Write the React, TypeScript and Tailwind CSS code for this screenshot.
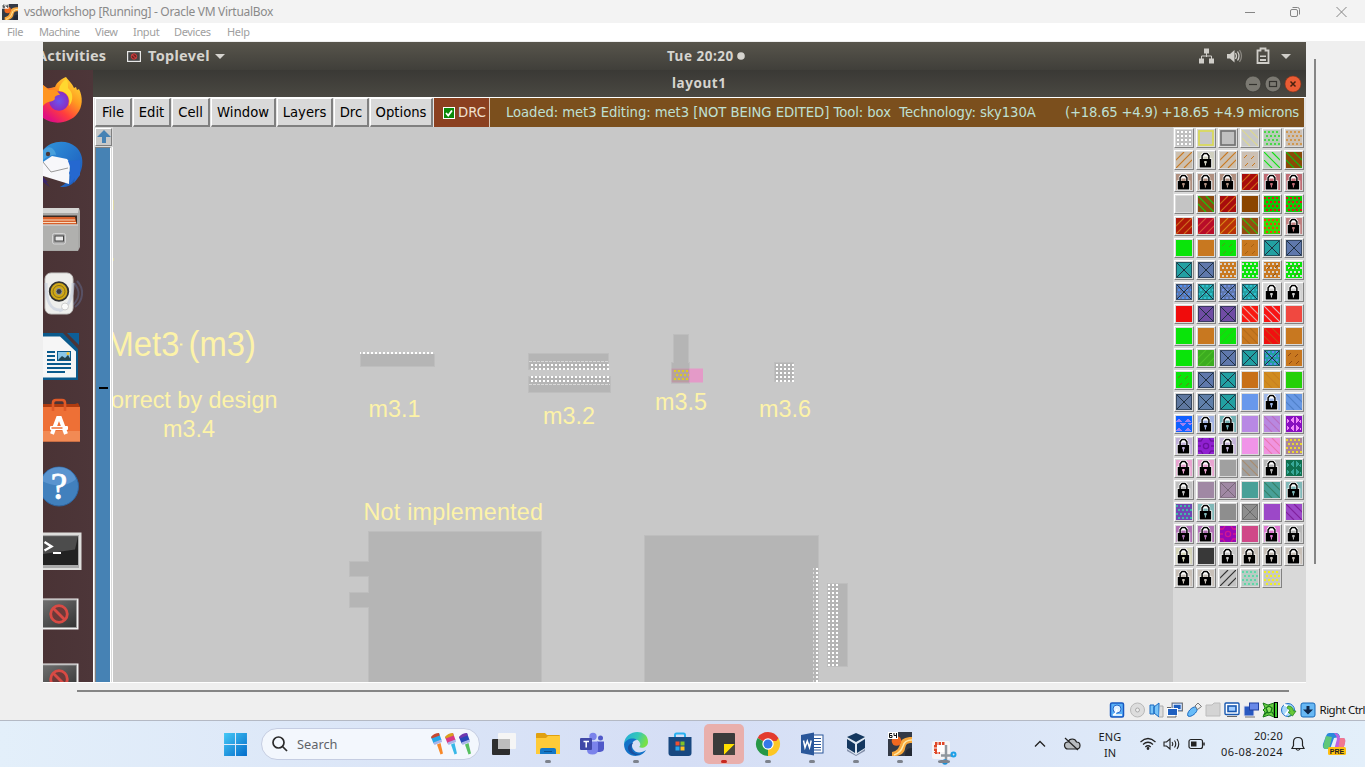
import React from "react";

type Kind = "solid" | "up" | "down" | "dots" | "dash" | "x" | "frame" | "lock" | "xdots" | "tri" | "rings" | "weave" | "dotdash" | "grid";
type Swatch = [Kind, string, string?];

const G = "#0ae40a";
const O = "#c87820";
const T = "#22a0a2";
const B = "#5f78ac";
const N = "#c8c8c8";

const swatches: Swatch[] = [
  ["grid", "#c0c0c0", "#ffffff"], ["frame", N, "#dcdc50"], ["frame", "#c0c0c0", "#707070"], ["down", N, "#dcd890"], ["dots", "#b8ccb8", "#48d848"], ["dots", "#ccc0b4", "#d09850"],
  ["up", "#ccc0b0", O], ["lock", "#d0d0c0"], ["up", "#ccc0b0", O], ["dash", "#ccc0b4", O], ["down", "#c0d4c0", "#10e010"], ["down", "#8b4a08", "#10c010"],
  ["lock", "#b09080"], ["lock", "#b09080"], ["lock", "#b09080"], ["up", "#a80c0c", "#d06818"], ["lock", "#c06c74"], ["lock", "#c06c74"],
  ["solid", "#c4c4c4"], ["down", "#8b4a10", "#10d010"], ["up", "#a80c0c", "#d06818"], ["solid", "#8b4500"], ["dots", "#10c808", "#e01818"], ["dotdash", "#10c808", "#e01818"],
  ["up", "#b01808", "#d07020"], ["up", "#b80c28", "#d85038"], ["up", "#b83008", "#d88818"], ["down", "#954c10", "#30c010"], ["dots", "#38d808", "#f04010"], ["lock", "#c08080"],
  ["solid", G], ["solid", O], ["dash", G, "#509c18"], ["dash", O, "#a86010"], ["x", T], ["x", B],
  ["x", T], ["x", B], ["dots", O, "#d8d0c8"], ["dots", G, "#d0e4d0"], ["dotdash", O, "#d8d0c8"], ["dotdash", G, "#d8e0d8"],
  ["xdots", B, "#5090f0"], ["xdots", T, "#30c0d0"], ["xdots", B, "#7090e0"], ["xdots", T, "#30c0d0"], ["lock", "#d0d0d0"], ["lock", "#d0d0d0"],
  ["solid", "#f00c0c"], ["x", "#704ca4"], ["x", "#704ca4"], ["down", "#f81810", "#e8a8a0"], ["down", "#f81414", "#e0b8c0"], ["solid", "#f04840"],
  ["solid", G], ["solid", O], ["up", G, "#28c818"], ["down", O, "#b46c1c"], ["down", "#f01010", "#c84818"], ["solid", O],
  ["solid", G], ["up", "#3cac20", "#4cc028"], ["x", B], ["x", T], ["xdots", T, "#5888f0"], ["dash", O, "#904810"],
  ["dash", G, "#688018"], ["x", B], ["x", T], ["solid", "#c87018"], ["down", "#d08c20", "#c88020"], ["solid", "#24d008"],
  ["x", "#5f78a0"], ["x", "#6080aa"], ["x", T], ["solid", "#6898ec"], ["lock", "#a0b8e8"], ["down", "#6898e4", "#5080c8"],
  ["tri", "#1060ff", "#a080f0"], ["lock", "#a0b0e0"], ["lock", "#70b0b4"], ["solid", "#b888e4"], ["down", "#b888e0", "#b870c0"], ["weave", "#8810c0", "#f088f8"],
  ["lock", "#c0b0d8"], ["rings", "#9020d0", "#6c10a0"], ["lock", "#c4b4d8"], ["solid", "#f094e8"], ["down", "#f094e0", "#e878b0"], ["dots", "#aa8498", "#e8d830"],
  ["lock", "#e8a4d0"], ["lock", "#e8a4d0"], ["solid", "#a0a0a0"], ["down", "#a0a0a0", "#a88c70"], ["lock", "#b8b8b8"], ["weave", "#107050", "#38a898"],
  ["lock", "#c0c0c0"], ["solid", "#a088a4"], ["x", "#a088a4", "#786878"], ["solid", "#48a098"], ["down", "#48a098", "#388068"], ["lock", "#80b8b8"],
  ["dots", "#7048b4", "#40b8a8"], ["lock", "#80b8b8"], ["solid", "#8e8e8e"], ["x", "#8e8e8e", "#686868"], ["solid", "#9c48c8"], ["down", "#9c48c8", "#80209c"],
  ["lock", "#b070b4"], ["lock", "#b070b4"], ["rings", "#9808b4", "#d01890"], ["solid", "#d04888"], ["lock", "#dc78d0"], ["lock", "#b8b8b8"],
  ["lock", "#d4d4b8"], ["solid", "#383838"], ["lock", "#c8c8c8"], ["lock", "#c8c0b8"], ["lock", "#c8c0b8"], ["lock", "#c8c0b8"],
  ["lock", "#c8c0b8"], ["lock", "#c8c0b8"], ["up", "#c4c4c4", "#303030"], ["dots", "#b8ccc4", "#60d8a8"], ["dots", "#c8c8c0", "#f0f020"],
];

const dotCells = [0, 1, 2, 3].flatMap((r) => [0, 1, 2, 3].map((c) => [c * 4 + (r % 2 ? 2 : 0), r * 4 + 1]));

function Pattern({ kind, bg, fg = "#203040" }: { kind: Kind; bg: string; fg?: string }) {
  const diag = (up: boolean) => (
    <g stroke={fg} strokeWidth="1.15" shapeRendering="auto">
      {[-8, 0, 8].map((o) => (up ? <path key={o} d={`M${o} 16L${o + 16} 0`} /> : <path key={o} d={`M${o} 0L${o + 16} 16`} />))}
    </g>
  );
  const dots = (
    <g fill={fg}>{dotCells.map(([x, y]) => <rect key={`${x}-${y}`} x={x} y={y} width="2" height="2" />)}</g>
  );
  switch (kind) {
    case "up":
      return diag(true);
    case "down":
      return diag(false);
    case "dots":
      return dots;
    case "grid":
      return <g fill={fg}>{[1, 5, 9, 13].flatMap((y) => [1, 5, 9, 13].map((x) => <rect key={`${x}-${y}`} x={x} y={y} width="2.4" height="2.4" />))}</g>;
    case "dotdash":
      return <g>{dots}<path d="M3 7l3-3M9 14l3-3M11 6l3-3" stroke="#805020" strokeWidth=".9" /></g>;
    case "dash":
      return <path d="M2 6l3-3M9 7l3-3M3 14l3-3M10 14l3-3" stroke={fg} strokeWidth="1" shapeRendering="auto" />;
    case "frame":
      return <rect x="1" y="1" width="14" height="14" fill="none" stroke={fg} strokeWidth="1.6" shapeRendering="auto" />;
    case "x":
      return <g stroke={fg} fill="none"><rect x=".5" y=".5" width="15" height="15" strokeWidth="1" opacity=".65" /><path d="M1 1L15 15M15 1L1 15" strokeWidth="1.2" /></g>;
    case "xdots":
      return <g>{dots}<g stroke="#203040" fill="none"><rect x=".5" y=".5" width="15" height="15" opacity=".55" /><path d="M1 1L15 15M15 1L1 15" strokeWidth="1.2" /></g></g>;
    case "tri":
      return <path fill={fg} d="M0 6l3-4 3 4zM9 6l3-4 3 4zM4 7h6l-3 4zM0 15l3-4 3 4zM9 15l3-4 3 4zM12 7h4l-2 3z" />;
    case "rings":
      return <g stroke={fg} fill="none" strokeWidth="1.3" shapeRendering="auto"><circle cx="8" cy="8" r="2.600" /><path d="M0 3h3l2-3M16 3h-3l-2-3M0 13h3l2 3M16 13h-3l-2 3M0 8h3M13 8h3" /></g>;
    case "weave":
      return <path fill={fg} d="M1 2l2 3-2 3zM1 9l2 3-2 3zM8 1v6L4 4zM8 9v6l-4-3zM10 1l3 3-3 3zM10 9l3 3-3 3zM15 3v5l-2-2zM15 11v4l-2-2z" />;
    case "lock":
      return (
        <g shapeRendering="auto" transform="translate(.7 0)">
          <path d="M0 16V6.500H2V3L4.300 0h5L11.500 3V6.500H13.500V16z" fill="#fff" />
          <path d="M3.400 7.500V3.800L5.300 1.500h3L10.200 3.800V7.500" fill="none" stroke="#000" strokeWidth="1.500" />
          <path d="M4.600 7V4.500h4.400V7z" fill={bg} />
          <path d="M1 7h11.500v8.500H1z" fill="#000" />
          <path d="M5.500 9h2.500v2.300h-.7V13.500H6.200V11.300H5.500z" fill={bg} />
        </g>
      );
    default:
      return null;
  }
}

function Palette() {
  return (
    <div className="grid w-[133px] shrink-0 grid-cols-6 content-start gap-[2px] bg-[#d9d9d9] pl-px pr-[2px] pt-px">
      {swatches.map(([kind, bg, fg], i) => (
        <div key={i} className="h-5 w-5 border border-b-[#828282] border-l-white border-r-[#828282] border-t-white bg-[#d9d9d9] p-px">
          <svg viewBox="0 0 16 16" className="block h-4 w-4" shapeRendering="crispEdges">
            <rect width="16" height="16" fill={bg} />
            <Pattern kind={kind} bg={bg} fg={fg} />
          </svg>
        </div>
      ))}
    </div>
  );
}

function DockIcon({ children }: { children: React.ReactNode }) {
  return <svg viewBox="0 0 50 64.3" className="block h-[64.3px] w-[50px] shrink-0">{children}</svg>;
}

function Blocked() {
  return (
    <DockIcon>
      <rect x="-10" y="16.500" width="45.500" height="31" fill="#f0f0f0" />
      <rect x="-10" y="18" width="43.500" height="27.500" fill="url(#term)" stroke="#999" />
      <circle cx="16" cy="32" r="8.300" fill="#6a3a3a" stroke="#d84a44" strokeWidth="2.800" />
      <path d="M10.500 26.500l11 11" stroke="#d84a44" strokeWidth="2.800" />
    </DockIcon>
  );
}

function Dock() {
  return (
    <div className="flex w-[50px] shrink-0 flex-col overflow-hidden bg-linear-to-r from-[#4a3335] to-[#4d3639]">
      <div className="-mt-[2px]">
        <DockIcon>
          <defs>
            <linearGradient id="ff" x1="1" y1="0" x2=".3" y2="1"><stop offset="0" stopColor="#ffee3c" /><stop offset=".45" stopColor="#ff9a20" /><stop offset=".75" stopColor="#ff3d3d" /><stop offset="1" stopColor="#e01080" /></linearGradient>
            <radialGradient id="globe"><stop offset="0" stopColor="#6a55f0" /><stop offset="1" stopColor="#8a2cc0" /></radialGradient>
            <linearGradient id="term" x1="0" y1="0" x2="1" y2="1"><stop offset="0" stopColor="#777" /><stop offset="1" stopColor="#333" /></linearGradient>
            <linearGradient id="tb" x1="0" y1="0" x2="1" y2="1"><stop offset="0" stopColor="#2f95dc" /><stop offset="1" stopColor="#1c55b8" /></linearGradient>
          </defs>
          <path d="M23 9c3 4 6 6 8 11l2-1 1 3 2-1c4 8 4 18-2 25-7 9-23 12-34 4V17l4 3c3 1 5-1 8-1 2-5 6-8 11-10z" fill="url(#ff)" />
          <circle cx="16" cy="33" r="9.800" fill="url(#globe)" />
          <path d="M0 17l6 5c4-1 9 0 11 5-4 0-6 2-5 4-3 4-8 1-12 7z" fill="#ff9520" />
          <path d="M16 23c8 0 12 7 10 15 5-6 4-14-1-18 0-4 0-7-2-9-5 4-7 8-7 12z" fill="#ffd830" />
        </DockIcon>
        <DockIcon>
          <path d="M0 18C8 8 24 7 33 15c10 9 8 27-4 37-4 3-8 3-12 3 6-3 8-6 9-10L0 40z" fill="url(#tb)" />
          <path d="M0 30l9-6 15 3 3 4-1 21-26-8z" fill="#f7f7fa" />
          <path d="M0 30l8 10 17-4" stroke="#999" fill="none" />
          <path d="M0 19c5-7 12-3 13 4-5-1-9 2-13 5z" fill="#48a0dc" />
          <circle cx="5" cy="22" r="2.200" fill="#4a3838" />
          <path d="M25 29l3 8-2 4 2 4-2 8 6-7-1 5 6-8V28z" fill="#2568d0" />
          <path d="M0 45l5 5h-2l4 5-7-5z" fill="#382468" />
        </DockIcon>
        <DockIcon>
          <path d="M0 11h36l1 3v36l-2 4H0z" fill="#a8a8a6" />
          <path d="M0 11h36l-1 5H0z" fill="#d5d5d3" />
          <rect y="18.500" width="34" height="11" fill="#3a2a22" />
          <path d="M0 20h32l2 8H0z" fill="#d8602a" />
          <path d="M0 23h32M0 25.500h33" stroke="#f8dcc0" />
          <path d="M0 27.500h35v25.500H0z" fill="#b0b0ae" />
          <path d="M0 28h35" stroke="#ddd" />
          <rect x="9.500" y="36.500" width="13" height="10.500" rx="2" fill="#a4a4a4" stroke="#d6d6d6" />
          <rect x="12" y="39" width="8.500" height="5" fill="#e8e8e8" stroke="#444" />
        </DockIcon>
        <DockIcon>
          <path d="M34 20c8 8 6 20-2 26M31 22c7 8 5 16-1 22" stroke="#687aa8" strokeWidth="2" fill="none" opacity=".4" />
          <rect x="2" y="12" width="28" height="41" rx="6" fill="#eeeeec" stroke="#c8c8c6" />
          <path d="M3 22c0 20 5 27 14 27M30 22c0 17-6 25-14 28" stroke="#c3cbdc" strokeWidth="3" fill="none" opacity=".6" />
          <circle cx="16" cy="30.500" r="9.300" fill="#d0a818" stroke="#333" strokeWidth="1.800" />
          <circle cx="16" cy="30.500" r="6" fill="none" stroke="#8a701a" />
          <circle cx="16" cy="30.500" r="3" fill="#3a3d44" stroke="#999" />
          <circle cx="22" cy="45.500" r="3.500" fill="#fafafa" stroke="#ccc" />
        </DockIcon>
        <DockIcon>
          <path d="M0 8h20l15 16v31H0z" fill="#0b5a8c" />
          <path d="M24 8h12v12z" fill="#0d5f98" />
          <path d="M0 11.500h17l16 15v26H0z" fill="#f6f6f6" />
          <path d="M4 27h8M4 31h8M4 35h8M4 39h24M4 43h24M4 47h18" stroke="#0b5a8c" strokeWidth="2" />
          <rect x="14.500" y="26.500" width="13" height="9" fill="#8ac6e8" stroke="#0b5a8c" />
          <path d="M15 35l4-4 3 2 3-3 3 5z" fill="#244450" />
          <circle cx="25" cy="28.500" r="1.500" fill="#f8c830" />
        </DockIcon>
        <DockIcon>
          <path d="M0 15h32l3-1 2 4v2H0z" fill="#b03c10" />
          <path d="M0 18h37v34.500H0z" fill="#ee7036" />
          <path d="M0 42h37v10.500H0z" fill="#f28a54" />
          <path d="M10 22v-8q0-3 3-3h6q3 0 3 3v8" fill="none" stroke="#e05a28" strokeWidth="2.600" />
          <path d="M9 45l6-16h2l6 16" fill="none" stroke="#fff" strokeWidth="4" />
          <rect x="7" y="37" width="18" height="4" rx="1" fill="#fff" />
          <path d="M8.500 39h11" stroke="#ee7036" strokeWidth="1.500" />
        </DockIcon>
        <DockIcon>
          <circle cx="16" cy="32.500" r="19.500" fill="#4180bd" stroke="#2e65a2" />
          <path d="M-1 25a18 18 0 0 1 34 0c-8 8-24 8-34 2z" fill="#6ba2da" opacity=".6" />
          <text x="16" y="45" textAnchor="middle" fontSize="37" fontFamily="Liberation Serif, serif" fill="#fff" stroke="#fff" strokeWidth=".8">?</text>
        </DockIcon>
        <DockIcon>
          <path d="M-2 14.500h40.500v37.500H-2z" fill="#dededc" />
          <path d="M-2 17h38v33H-2z" fill="#aaa" />
          <path d="M-2 18.500h37v28.500H-2z" fill="#222" />
          <path d="M-2 18.500h37l-3 13L0 36z" fill="#4c4c4c" />
          <path d="M1.500 24l7 4.500-7 4" stroke="#fff" strokeWidth="2.400" fill="none" />
          <path d="M10 35h8" stroke="#fff" strokeWidth="2" />
        </DockIcon>
        <Blocked />
        <Blocked />
      </div>
    </div>
  );
}

function LayoutCanvas() {
  return (
    <svg viewBox="113 127 1060 555" className="block h-[555px] w-[1060px] shrink-0 bg-[#c8c8c8]">
      <defs>
        <pattern id="dw" x="361" y="352" width="4" height="4" patternUnits="userSpaceOnUse"><rect x="2" width="2" height="2" fill="#fff" /></pattern>
        <pattern id="d2" x="529" y="364" width="4" height="4" patternUnits="userSpaceOnUse"><rect x="2" width="2" height="2" fill="#fff" /></pattern>
        <pattern id="d3" x="529" y="376" width="4" height="4" patternUnits="userSpaceOnUse"><rect x="2" width="2" height="2" fill="#fff" /></pattern>
        <pattern id="d6" x="776" y="364" width="4" height="4" patternUnits="userSpaceOnUse"><rect width="2" height="2" fill="#fff" /></pattern>
        <pattern id="dv" x="816" y="568" width="4" height="4" patternUnits="userSpaceOnUse"><rect width="2" height="2" fill="#fff" /></pattern>
        <pattern id="dr" x="828" y="584" width="4" height="4" patternUnits="userSpaceOnUse"><rect width="2" height="2" fill="#fff" /></pattern>
      </defs>
      <g fill="#b5b5b5" stroke="#bebebe" strokeWidth="1" shapeRendering="crispEdges">
        <rect x="360.500" y="353.500" width="74" height="12.500" />
        <rect x="528.500" y="353.500" width="80" height="16" />
        <rect x="528.500" y="376.500" width="82" height="16" />
        <rect x="673.500" y="334.500" width="15" height="30" />
        <rect x="671.500" y="362.500" width="18" height="21" />
        <rect x="774.500" y="362.500" width="19" height="19" />
        <rect x="349.500" y="561.500" width="20" height="15" />
        <rect x="349.500" y="592.500" width="20" height="15" />
        <rect x="368.500" y="531.500" width="173" height="155" />
        <rect x="644.500" y="535.500" width="174" height="155" />
        <rect x="827.500" y="583.500" width="20" height="83" />
      </g>
      <path d="M367 562h4v14h-4zM367 593h4v14h-4zM674 361h14v4h-14z" fill="#b5b5b5" />
      <rect x="360" y="351" width="75" height="3" fill="#c8c8c8" />
      <rect x="360" y="352" width="75" height="2" fill="url(#dw)" />
      <path d="M529 361.500h80" stroke="#d8d8d8" strokeDasharray="3 1" />
      <rect x="529" y="364" width="80" height="6" fill="url(#d2)" />
      <rect x="529" y="376" width="82" height="6" fill="url(#d3)" />
      <path d="M529 384.500h81" stroke="#d8d8d8" strokeDasharray="3 1" />
      <rect x="689" y="368.500" width="14" height="14" fill="#e49ac8" />
      <rect x="672" y="369" width="17" height="13" fill="#b4a49c" stroke="#c890b0" strokeWidth=".7" />
      <g fill="#dcc828">
        {[0, 1, 2].flatMap((r) => [0, 1, 2, 3].map((c) => <rect key={`${r}-${c}`} x={(r === 1 ? 676 : 674) + c * 4} y={370 + r * 4} width={r === 1 && c === 3 ? 1 : 2} height="2" />))}
      </g>
      <rect x="776" y="364" width="18" height="18" fill="url(#d6)" />
      <path d="M813.500 568v114" stroke="#ddd" strokeDasharray="2 2" />
      <rect x="816" y="568" width="2" height="114" fill="url(#dv)" />
      <rect x="828" y="584" width="11" height="82" fill="url(#dr)" />
      <path d="M113.500 200v10M113.500 258v3" stroke="#dcd8a8" strokeWidth="1" />
      <g fill="#fdf3a8" fontFamily="Liberation Sans, Arial, sans-serif" fontSize="23.400">
        <text x="256" y="356" textAnchor="end" fontSize="34.500" textLength="149.500" lengthAdjust="spacingAndGlyphs">Met3 (m3)</text>
        <path d="M180 344.500h2.500" stroke="#fdf3a8" strokeWidth="2" />
        <text x="277.500" y="407.500" textAnchor="end">Correct by design</text>
        <text x="189" y="437" textAnchor="middle">m3.4</text>
        <text x="394.500" y="417" textAnchor="middle">m3.1</text>
        <text x="569" y="424" textAnchor="middle">m3.2</text>
        <text x="681" y="410" textAnchor="middle">m3.5</text>
        <text x="785" y="417" textAnchor="middle">m3.6</text>
        <text x="363.500" y="520" textLength="179.500">Not implemented</text>
      </g>
    </svg>
  );
}

function ToolButton({ className, children }: { className: string; children: React.ReactNode }) {
  return (
    <div className={`flex h-[29px] shrink-0 items-center justify-center border-b-2 border-l border-r-2 border-t border-b-[#808080] border-l-white border-r-[#808080] border-t-white bg-[#d9d9d9] pt-px text-black ${className}`}>
      {children}
    </div>
  );
}

function Toolbar() {
  return (
    <div className="flex h-[30px] gap-px border-l border-t border-white bg-[#e4e4e4] pl-px font-['DejaVu_Sans',sans-serif] text-[13.200px]">
      <ToolButton className="w-[37px]">File</ToolButton>
      <ToolButton className="w-[38px]">Edit</ToolButton>
      <ToolButton className="w-[38px]">Cell</ToolButton>
      <ToolButton className="w-[65px]">Window</ToolButton>
      <ToolButton className="w-[56px]">Layers</ToolButton>
      <ToolButton className="w-[35px]">Drc</ToolButton>
      <ToolButton className="w-[63px]">Options</ToolButton>
      <div className="flex h-[29px] w-[56px] items-center border-r border-[#d8c8b8] bg-[#8b4020] pl-[9px] text-[#f0e0d0]">
        <svg viewBox="0 0 12 12" className="mr-[3px] h-3 w-3">
          <rect x=".5" y=".5" width="11" height="11" fill="#0a8a0a" stroke="#fff" />
          <path d="M3 6l2.200 2.500L9 3.500" stroke="#fff" strokeWidth="1.800" fill="none" />
        </svg>
        DRC
      </div>
      <div className="-ml-px mr-[2px] flex flex-1 items-center justify-between whitespace-pre bg-[#7b4f1d] pl-4 pr-[5px] text-[#bfe0d4]">
        <span className="tracking-[-0.060px]">Loaded: met3 Editing: met3 [NOT BEING EDITED] Tool: box  Technology: sky130A</span>
        <span className="tracking-[-0.210px]">(+18.65 +4.9) +18.65 +4.9 microns</span>
      </div>
    </div>
  );
}

function GuestTopBar() {
  return (
    <div className="flex h-[28px] items-center bg-linear-to-b from-[#58554c] to-[#403f3a] font-['Noto_Sans','Open_Sans',sans-serif] text-[14.500px] font-bold text-[#d6d4cf]">
      <div className="w-[84px] overflow-hidden"><span className="-ml-[6px] tracking-[0.200px]">Activities</span></div>
      <svg viewBox="0 0 14 11" className="h-[11px] w-[14px]">
        <rect x=".6" y=".6" width="12.800" height="9.800" fill="#444" stroke="#e8e8e8" strokeWidth="1.200" />
        <circle cx="7" cy="5.500" r="2.700" stroke="#d83c3c" fill="#702020" />
        <path d="M5 3.500l4 4" stroke="#e05050" />
      </svg>
      <span className="ml-[7px] w-[62px] tracking-[0.300px]">Toplevel</span>
      <svg viewBox="0 0 10 5" className="ml-[5px] h-[5px] w-[10px]"><path d="M0 0h10L5 5z" fill="#d6d4cf" /></svg>
      <div className="ml-[442px] flex w-[82px] items-center">
        <span className="whitespace-nowrap text-[13.500px] tracking-[0.500px]">Tue 20:20</span>
        <svg viewBox="0 0 8 8" className="ml-[3px] h-2 w-2 shrink-0"><circle cx="4" cy="4" r="3.800" fill="#d6d4cf" /></svg>
      </div>
      <svg viewBox="0 0 100 20" className="ml-auto mr-[10px] h-5 w-[100px]" fill="#d0cec9">
        <path d="M8 2.500h5v5H8zM3 12.500h5v5H3zM13 12.500h5v5h-5z" />
        <path d="M10.500 7v4M5.500 13v-3h10v3" stroke="#d0cec9" fill="none" />
        <path d="M31 8h3l4.500-4v12.500l-4.500-4h-3z" />
        <path d="M39.500 7q2 3 0 6M41.500 5.500q3 4.500 0 9" stroke="#d0cec9" strokeWidth="1.300" fill="none" />
        <path d="M43.500 4q4 6 0 12" stroke="#8a8780" strokeWidth="1.300" fill="none" />
        <path d="M64.500 2.500h5v2h3V17H61.500V4.500h3z" fill="none" stroke="#d0cec9" strokeWidth="1.800" />
        <path d="M64 9.500h6v1.500h-6zM64 13h6v2h-6z" />
        <path d="M85 8h10l-5 5z" />
      </svg>
    </div>
  );
}

function GuestTitle() {
  return (
    <div className="flex h-[27px] items-center bg-linear-to-b from-[#3a3935] to-[#4a4842] font-['Noto_Sans','Open_Sans',sans-serif] text-[13.500px] font-bold text-[#d6d4cf]">
      <span className="ml-[579px] tracking-[0.550px]">layout1</span>
      <svg viewBox="0 0 58 18" className="ml-auto mr-[4px] h-[18px] w-[58px]">
        <circle cx="9" cy="9" r="7.900" fill="#7b7972" stroke="#33322e" strokeWidth=".6" /><path d="M5 9.500h8" stroke="#33322e" strokeWidth="1.200" />
        <circle cx="29" cy="9" r="7.900" fill="#7b7972" stroke="#33322e" strokeWidth=".6" /><rect x="25.500" y="6.500" width="7" height="5" fill="none" stroke="#33322e" strokeWidth="1.200" />
        <circle cx="49" cy="9" r="8" fill="#ea5c34" stroke="#8a3018" strokeWidth=".6" /><path d="M46.500 6.500l5 5M51.500 6.500l-5 5" stroke="#46210f" strokeWidth="1.500" />
      </svg>
    </div>
  );
}

function ScrollColumn() {
  return (
    <div className="flex w-[20px] shrink-0 flex-col border-l border-white bg-[#d9d9d9] pl-px">
      <div className="mt-px flex h-[18px] w-[17px] items-center justify-center border border-b-[#808080] border-l-white border-r-[#808080] border-t-white bg-[#c8c8c8]">
        <svg viewBox="0 0 14 14" className="h-[14px] w-[14px]"><path d="M7 0l7 7H9v6H5V7H0z" fill="#4682b4" /></svg>
      </div>
      <div className="mt-px flex w-[18px] flex-1 border-r border-white">
        <div className="flex w-4 justify-center border-l border-r border-t border-l-[#808080] border-r-white border-t-[#808080] bg-[#4682b4] pt-[239px]">
          <div className="h-[2px] w-[9px] bg-black" />
        </div>
      </div>
    </div>
  );
}

function BrandTile({ className }: { className: string }) {
  return (
    <svg viewBox="0 0 24 24" className={className}>
      <rect width="24" height="24" fill="#343a46" />
      <path d="M4 24v-4c5-1 7-4 8-8 1-5 5-7 12-7v6c-6 0-6 2-7 6-1 4-4 6-8 7z" fill="#f9a83c" />
      <path d="M6 23c6-2 8-6 9-9 1-4 4-6 9-6" stroke="#ffe9a8" strokeWidth="1.500" fill="none" />
      <circle cx="8.500" cy="9" r="4.800" fill="#f06820" />
      <path d="M17 24c0-5 2-8 7-8v8z" fill="#242934" />
      <rect width="10" height="7" fill="#fff" />
      <path d="M4 1.500H1.500v4H4v-2H1.500M6 1v2.500h2.500M8.500 1v5" stroke="#111" strokeWidth="1" fill="none" />
    </svg>
  );
}

function HostChrome() {
  return (
    <>
      <div className="flex h-[23px] items-center bg-[#f3f3f3] font-['Noto_Sans','Open_Sans',sans-serif] text-[12px] text-[#8a8a8a]">
        <BrandTile className="ml-[2px] h-4 w-4" />
        <span className="ml-[6px] tracking-[-0.310px]">vsdworkshop [Running] - Oracle VM VirtualBox</span>
        <svg viewBox="0 0 104 12" className="ml-auto mr-[17px] h-3 w-[104px]" fill="none" stroke="#858585">
          <path d="M1 6.500h10M92.500 1l10 10M102.500 1l-10 10" />
          <rect x="46.500" y="3.500" width="7" height="7" rx="1.500" />
          <path d="M48.500 1.500h5q2 0 2 2v5" />
        </svg>
      </div>
      <div className="flex h-[18px] items-center bg-white pl-[7px] pt-px font-['Noto_Sans','Open_Sans',sans-serif] text-[11px] tracking-[-0.350px] text-[#a0a0a0]">
        <span className="w-[32px]">File</span>
        <span className="w-[56px] tracking-[-0.500px]">Machine</span>
        <span className="w-[38px]">View</span>
        <span className="w-[41px]">Input</span>
        <span className="w-[53px]">Devices</span>
        <span>Help</span>
      </div>
    </>
  );
}

function StatusBar() {
  const S = ({ children }: { children: React.ReactNode }) => <svg viewBox="0 0 16 16" className="h-4 w-4 shrink-0">{children}</svg>;
  return (
    <div className="mt-[9px] flex h-[18px] items-center justify-end gap-[3.100px] font-['Noto_Sans','Open_Sans',sans-serif] text-[11.500px] text-[#111]">
      <S><rect x="1.500" y="1" width="13" height="14" rx="1.500" fill="#58b0f8" stroke="#1858c0" strokeWidth="1.500" /><circle cx="8" cy="7" r="4" fill="#e0f0ff" stroke="#2868c8" /><path d="M8 7q-1 5-4 6h9" stroke="#fff" fill="none" strokeWidth="1.500" /></S>
      <S><circle cx="8.500" cy="8" r="7" fill="#ddd" stroke="#b8b8b8" /><circle cx="8.500" cy="8" r="2" fill="#eee" stroke="#aaa" /></S>
      <S><path d="M2 3h4v9H2zM6 5l5-4v14l-5-4z" fill="#78c4f8" stroke="#1868c0" /><path d="M12 4h3v11h-4" stroke="#aaa" fill="#ddd" /></S>
      <S><rect x="5" y="1" width="10.500" height="8" fill="#2060c0" stroke="#777" /><rect x="6.200" y="2.200" width="8" height="5.500" fill="#2060c0" stroke="#fff" /><rect x=".5" y="6.500" width="10" height="7" fill="#2060c0" stroke="#fff" /><path d="M0 15h9v-1.500M0 5.500h4" stroke="#666" fill="none" /></S>
      <S><path d="M2 14c-2-3 4-10 8-9l1 2c1 3-6 9-9 7z" fill="#68bcf8" stroke="#1868c0" /><path d="M9 4l3-3 3.500 3.500-4 3z" fill="#eee" stroke="#777" /></S>
      <S><path d="M1 3h6l2-2h6v13H1z" fill="#d4d4d4" stroke="#bcbcbc" /></S>
      <S><rect x="1" y="1" width="14" height="11.500" rx="1" fill="#fff" stroke="#1858b0" strokeWidth="1.400" /><rect x="4" y="4" width="8" height="5.500" fill="#a0ccff" stroke="#1858b0" strokeWidth="1.600" /><path d="M3 14.500h10" stroke="#666" /></S>
      <S><rect x="1" y="4" width="10" height="10" fill="#2858c0" stroke="#e0e0f0" /><rect x="6.500" y="1" width="9" height="7" fill="#6888e8" stroke="#2040a0" /><path d="M2 15h10" stroke="#777" /></S>
      <S><path d="M1 1l5 2 6-2v14l-5-2-6 2 2-5-2-2 2-2z" fill="#68d040" stroke="#187818" /><path d="M4 6l3-2 3 2-1 4-3 1zM2 13l3-3M10 10l2 3" stroke="#187818" strokeWidth="1.300" fill="#90e060" /><rect x="12.500" y=".5" width="3" height="15" fill="#40c830" stroke="#000" /></S>
      <S><circle cx="7" cy="8" r="6.500" fill="#a8d8fc" stroke="#2070c8" /><path d="M3 3q4 0 5 5l-4 5" fill="none" stroke="#fff" strokeWidth="2" /><path d="M7 4q5 0 5.500 5H15l-3.500 5L7 10h2q0-3-3-4zM10 13l-3 2" fill="#68c838" stroke="#288820" strokeWidth=".8" /></S>
      <S><rect x="1" y="1" width="14" height="14" rx="2" fill="#68b8f4" stroke="#1868b8" /><path d="M6.500 4h3v3.500H13l-5 5-5-5h3.500z" fill="#10284c" /></S>
      <span className="w-[45.500px] whitespace-nowrap tracking-[-0.500px]">Right Ctrl</span>
    </div>
  );
}

function AppSlot({ children, dot = "", active = false }: { children: React.ReactNode; dot?: string; active?: boolean }) {
  return (
    <div className={`mx-[2px] flex h-10 w-10 shrink-0 flex-col items-center rounded-[5px] pt-2 ${active ? "bg-[#e9afac]" : ""}`}>
      <svg viewBox="0 0 24 24" className="h-6 w-6 shrink-0 overflow-visible">{children}</svg>
      <div className={`mt-1 h-[3px] w-[6px] shrink-0 rounded-full ${dot}`} />
    </div>
  );
}

function Brush({ x, top, bristle, handle }: { x: number; top: string; bristle: string; handle: string }) {
  return (
    <g transform={`translate(${x} 0)`}>
      <path d="M0 4l8-4 2.500 7-8 3.500z" fill={bristle} />
      <path d="M0 4Q3 0 8 0l.7 2.500-8 3z" fill={top} />
      <path d="M2.500 9.500l8-3 .5 2.500-7.500 3z" fill="#a8b4e8" />
      <path d="M6 11.500l3.500-1.500L12 20.500l-2.500 1z" fill={handle} />
    </g>
  );
}

function Taskbar() {
  const run = "bg-[#7d828c]";
  return (
    <div className="flex h-[47px] shrink-0 items-center border-t border-[#b4b9c4] bg-linear-to-r from-[#e3effa] from-0% via-[#d5def5] via-50% to-[#e3effa] to-100% font-['Noto_Sans','Open_Sans',sans-serif]">
      <svg viewBox="0 0 24 24" className="ml-[223px] mt-px h-[25px] w-[25px]">
        <defs><linearGradient id="win" gradientUnits="userSpaceOnUse" x1="0" y1="0" x2="24" y2="24"><stop offset="0" stopColor="#48ccf8" /><stop offset="1" stopColor="#0068c8" /></linearGradient></defs>
        <path d="M1 1h10.500v10.500H1zM12.500 1H23v10.500H12.500zM1 12.500h10.500V23H1zM12.500 12.500H23V23H12.500z" fill="url(#win)" />
      </svg>
      <div className="ml-[13px] mr-[2px] flex h-8 w-[219px] items-center rounded-full border border-[#c5cde2] bg-[#f3f7fd] pl-[10px]">
        <svg viewBox="0 0 16 16" className="h-4 w-4" fill="none" stroke="#2a2a2a" strokeWidth="1.700"><circle cx="6.500" cy="6.500" r="5.500" /><path d="M10.500 10.500l4.500 4.500" /></svg>
        <span className="ml-[9px] pt-px text-[12.800px] text-[#5f6368]">Search</span>
        <svg viewBox="0 0 42 22" className="ml-auto mr-[6px] h-[22px] w-[42px]">
          <Brush x={0} top="#c84830" bristle="#28a8e8" handle="#f88828" />
          <Brush x={14} top="#d8a020" bristle="#d83888" handle="#38b8e8" />
          <Brush x={28} top="#7038b0" bristle="#2848b8" handle="#58c060" />
        </svg>
      </div>
      <AppSlot><rect y="7" width="18" height="16" rx="1" fill="#2e2e2e" /><rect x="6" y="1" width="18" height="16" rx="1" fill="#f5f5f5" /><rect x="6" y="7" width="12" height="10" fill="#bdbdbd" /></AppSlot>
      <AppSlot dot={run}><path d="M0 2q0-1 1-1h8l2 2h12q1 0 1 1v6H0z" fill="#e0a010" /><path d="M0 6h10l2-2h12v18H0z" fill="#ffcb38" /><path d="M4 22v-4q0-2 2-2h12q2 0 2 2v4z" fill="#1478c8" /><path d="M8 19.500h8" stroke="#0a5090" /></AppSlot>
      <AppSlot><circle cx="13" cy="4.500" r="3.700" fill="#7b83eb" /><circle cx="20.500" cy="6" r="2.500" fill="#5059c9" /><path d="M17 9.500h7v7q0 3-4 3.500h-3z" fill="#5059c9" /><path d="M7 9.500h11v8q0 5-5.500 5T7 18z" fill="#7b83eb" /><rect y="6" width="12" height="12" rx="1" fill="#4048a8" /><path d="M3.500 9.500h5.500M6.200 9.500V15.500" stroke="#fff" strokeWidth="1.500" /></AppSlot>
      <AppSlot dot={run}>
        <defs><linearGradient id="edge" x1="0" y1="0" x2="1" y2=".3"><stop offset="0" stopColor="#22a8dc" /><stop offset=".6" stopColor="#35c8b8" /><stop offset="1" stopColor="#78e048" /></linearGradient></defs>
        <path d="M0 12C1-3 24-4 24 10c0 5-6 7-9 5 0 0 2-1 1-4-2-6-13-4-16 1z" fill="url(#edge)" />
        <path d="M0 12C2 7 9 5 13 8c-5 0-6 6-4 9 3 5 9 4 13 1-6 10-22 7-22-6z" fill="#1272c8" />
        <path d="M9 11c-4 5 0 12 7 11-6 3-13-2-12-7 1-3 3-4 5-4z" fill="#1a50a0" />
      </AppSlot>
      <AppSlot><path d="M7 6V3q0-1.500 1.500-1.500h7Q17 1.500 17 3v3" fill="none" stroke="#28b0f0" strokeWidth="2" /><path d="M.5 5h23v16q0 3-3 3h-17q-3 0-3-3z" fill="#184880" /><path d="M7.500 9.500h4v4h-4z" fill="#f05030" /><path d="M12.500 9.500h4v4h-4z" fill="#80c028" /><path d="M7.500 14.500h4v4h-4z" fill="#28a8f0" /><path d="M12.500 14.500h4v4h-4z" fill="#ffc020" /></AppSlot>
      <AppSlot active dot="bg-[#c82820]"><rect x="1" y="1" width="22" height="22" rx="1" fill="#3b3b3b" /><path d="M12 12h11l-11 11z" fill="#ffde00" /><path d="M23 12v11H12z" fill="#4a4640" /></AppSlot>
      <AppSlot dot={run}><path d="M12 12L1.600 6A12 12 0 0 1 22.400 6z" fill="#e33b2e" /><path d="M12 12L12 24A12 12 0 0 1 1.600 6z" fill="#279847" /><path d="M12 12l10.400-6A12 12 0 0 1 12 24z" fill="#fcc624" /><path d="M12 6h10.400l-2 3H12z" fill="#e33b2e" /><circle cx="12" cy="12" r="5.700" fill="#fff" /><circle cx="12" cy="12" r="4.500" fill="#3478e8" /></AppSlot>
      <AppSlot dot={run}><rect x="11" y="3" width="12" height="18" fill="#fff" stroke="#2a579a" /><path d="M14 6.500h7M14 9.500h7M14 12.500h7M14 15.500h7M14 18h7" stroke="#2a579a" /><path d="M1 3l13-2.500v23L1 21z" fill="#2a579a" /><path d="M3.500 8.500l1.500 7 2.300-6.500 2.200 6.500 1.700-7" fill="none" stroke="#fff" strokeWidth="1.500" /></AppSlot>
      <AppSlot dot={run}><path d="M12 1l9 4v12l-9 6-9-6V5z" fill="#dfe8f2" /><path d="M12 1l9 4-9 5-9-5zM3 7l8 5v9l-8-5zM21 7l-8 5v9l8-5z" fill="#14375f" /><path d="M3 17l9 6 9-6v2l-9 5-9-5z" fill="#8490aa" /></AppSlot>
      <div className="mx-[2px] flex h-10 w-10 shrink-0 flex-col items-center pt-2"><BrandTile className="h-6 w-6 shrink-0" /><div className="mt-1 h-[3px] w-[6px] rounded-full bg-[#7d828c]" /></div>
      <AppSlot dot="bg-[#7d828c] scale-x-200"><rect x="0" y="9" width="18" height="18" rx="2" fill="#f4f4f6" /><path d="M3 11.500h10M3.500 13v8M3 20.500h5" stroke="#e04828" strokeWidth="3" strokeDasharray="2.500 1" fill="none" /><rect x="5" y="13" width="8" height="7" fill="#fff" /><path d="M14 13v16M9 23.500h12" stroke="#8f979e" strokeWidth="2.500" /><circle cx="21.500" cy="22.500" r="2" fill="none" stroke="#1aa0e8" strokeWidth="2" /><circle cx="13" cy="30" r="1.800" fill="none" stroke="#1890d8" strokeWidth="2" /></AppSlot>
      <div className="ml-auto flex h-full items-center text-[11px] leading-4 text-[#1c1c1c]">
        <svg viewBox="0 0 12 12" className="h-3 w-3" fill="none" stroke="#222" strokeWidth="1.300"><path d="M1 8.500l5-5 5 5" /></svg>
        <svg viewBox="0 0 18 16" className="ml-[17px] h-4 w-[18px]" fill="#b8bcc0" stroke="#222" strokeWidth="1.200"><path d="M5 13a3.500 3.500 0 0 1 0-7 4.500 4.500 0 0 1 8.500 0 3.500 3.500 0 0 1 0 7z" /><path d="M2 2l13 12" /></svg>
        <div className="ml-[13px] flex w-[32px] flex-col items-center pt-px"><span className="tracking-[0.200px]">ENG</span><span>IN</span></div>
        <svg viewBox="0 0 16 16" className="ml-[14px] h-4 w-4" fill="none" stroke="#222" strokeWidth="1.200"><path d="M.5 6q7.500-7 15 0M3 8.500q5-4.500 10 0M5.300 11q2.700-2.500 5.400 0" /><circle cx="8" cy="12.500" r=".8" fill="#222" /></svg>
        <svg viewBox="0 0 18 16" className="ml-[7px] h-4 w-[18px]" fill="none" stroke="#222" strokeWidth="1.100"><path d="M1 6h2.500L7 3v10L3.500 10H1zM9 6q1.500 2 0 4M11.500 4.500q2.500 3.500 0 7M14 3q3.500 5 0 10" /></svg>
        <svg viewBox="0 0 18 12" className="ml-[7px] h-3 w-[18px]"><rect x="1" y="1.500" width="13.500" height="9" rx="2" fill="none" stroke="#222" strokeWidth="1.200" /><rect x="3" y="3.500" width="5.500" height="5" fill="#222" /><path d="M16 4.500v3" stroke="#222" strokeWidth="1.500" /></svg>
        <div className="ml-[8px] flex w-[69px] flex-col items-end whitespace-nowrap"><span className="tracking-[0.200px]">20:20</span><span className="tracking-[0.450px]">06-08-2024</span></div>
        <svg viewBox="0 0 14 16" className="ml-[8px] h-4 w-[14px]" fill="none" stroke="#222" strokeWidth="1.200"><path d="M7 1.500q4.500 0 4.500 4.500v3.500l1.500 3H1l1.500-3V6Q2.500 1.500 7 1.500zM5 13q2 2.500 4 0" /></svg>
        <svg viewBox="0 0 26 26" className="ml-[17px] mr-[17px] h-[26px] w-[26px]">
          <path d="M7 2h7q3 0 4 4l-6 1-4 11H4q-4 0-3-5L4 5q1-3 3-3z" fill="#2a88dc" />
          <path d="M2 12l2-7 6 1-3 12H4q-4 0-2-6z" fill="#60c878" />
          <path d="M12 2q5 0 6 5h3q3 0 2 5l-2 7H12l3-11q0-3-3-6z" fill="#c060e0" />
          <path d="M18 7h3q3 0 2 5l-2 7h-5z" fill="#f07890" />
          <rect x="6" y="16" width="18" height="8" rx="1.500" fill="#ffc010" />
          <text x="15" y="22.700" fontSize="7" fontWeight="bold" textAnchor="middle" fontFamily="Liberation Sans, sans-serif" fill="#222">PRE</text>
        </svg>
      </div>
    </div>
  );
}

export default function App() {
  return (
    <div className="flex h-[767px] w-[1365px] flex-col overflow-hidden bg-[#efefef]">
      <HostChrome />
      <div className="flex h-[642px] items-start pl-[43px] pt-px">
        <div className="flex h-[641px] w-[1263px] flex-col overflow-hidden border-b border-white">
          <GuestTopBar />
          <div className="flex min-h-0 flex-1">
            <Dock />
            <div className="flex min-w-0 flex-1 flex-col">
              <GuestTitle />
              <Toolbar />
              <div className="flex min-h-0 flex-1">
                <ScrollColumn />
                <LayoutCanvas />
                <Palette />
              </div>
            </div>
          </div>
        </div>
        <div className="ml-2 mt-[17px] h-[505px] w-[2px] bg-[#858585]" />
      </div>
      <div className="ml-[77px] mt-[7px] h-[2px] w-[1212px] shrink-0 bg-[#858585]" />
      <StatusBar />
      <div className="flex-1" />
      <Taskbar />
    </div>
  );
}
